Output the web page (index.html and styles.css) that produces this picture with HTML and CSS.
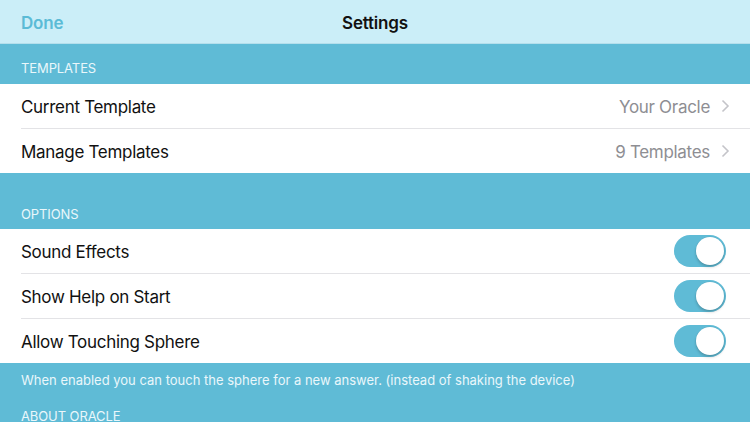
FILE: index.html
```html
<!DOCTYPE html>
<html>
<head>
<meta charset="utf-8">
<link rel="stylesheet" href="styles.css">
</head>
<body>
<div class="nav">
  <span class="done">Done</span>
  <span class="title">Settings</span>
</div>
<div class="section-head">TEMPLATES</div>
<div class="group">
  <div class="row">
    <span class="label">Current Template</span>
    <span class="value">Your Oracle</span>
    <svg class="chev" width="9" height="14" viewBox="0 0 9 14"><path d="M1.5 1.5 L7 7 L1.5 12.5" fill="none" stroke="#c4c4c9" stroke-width="1.6"/></svg>
  </div>
  <div class="row">
    <span class="label">Manage Templates</span>
    <span class="value">9 Templates</span>
    <svg class="chev" width="9" height="14" viewBox="0 0 9 14"><path d="M1.5 1.5 L7 7 L1.5 12.5" fill="none" stroke="#c4c4c9" stroke-width="1.6"/></svg>
  </div>
</div>
<div class="section-head tall">OPTIONS</div>
<div class="group">
  <div class="row">
    <span class="label">Sound Effects</span>
    <span class="toggle"><span class="knob"></span></span>
  </div>
  <div class="row">
    <span class="label">Show Help on Start</span>
    <span class="toggle"><span class="knob"></span></span>
  </div>
  <div class="row">
    <span class="label">Allow Touching Sphere</span>
    <span class="toggle"><span class="knob"></span></span>
  </div>
</div>
<div class="footer">When enabled you can touch the sphere for a new answer. (instead of shaking the device)</div>
<div class="section-head about">ABOUT ORACLE</div>
</body>
</html>
```
FILE: styles.css
```css
* { box-sizing: border-box; }
html, body { margin: 0; padding: 0; }
body {
  width: 750px;
  height: 422px;
  overflow: hidden;
  background: #5fbbd6;
  font-family: Inter, "Noto Sans", sans-serif;
  -webkit-font-smoothing: antialiased;
}
.nav {
  height: 44px;
  background: #cbeef8;
  display: flex;
  align-items: center;
  justify-content: center;
  position: relative;
  padding-top: 2px;
  border-bottom: 1px solid #b4dfec;
}
.done {
  position: absolute;
  left: 21px;
  top: 13px;
  font-size: 17px;
  font-weight: 600;
  color: #5bbbd6;
  letter-spacing: -0.2px;
}
.title {
  font-size: 17px;
  font-weight: 600;
  color: #111;
  letter-spacing: -0.2px;
}
.section-head {
  height: 40px;
  padding: 16px 0 0 21px;
  font-size: 13px;
  color: #eaf7fb;
  letter-spacing: -0.1px;
}
.section-head.tall {
  height: 56px;
  padding-top: 33px;
}
.group {
  background: #fff;
}
.row {
  height: 44px;
  display: flex;
  align-items: center;
  padding: 2px 20px 0 21px;
  position: relative;
}
.row + .row {
  height: 45px;
  padding-top: 3px;
}
.row + .row::before {
  content: "";
  position: absolute;
  top: 0;
  left: 21px;
  right: 0;
  height: 1px;
  background: #e3e3e6;
}
.label {
  flex: 1;
  font-size: 17px;
  color: #111;
  letter-spacing: -0.3px;
}
.value {
  font-size: 17px;
  color: #8e8e93;
  letter-spacing: -0.3px;
  margin-right: 11px;
}
.chev { display: block; margin-top: -2px; }
.toggle {
  width: 52px;
  height: 32px;
  border-radius: 16px;
  background: #5fbbd6;
  position: relative;
  margin-right: 4px;
  margin-top: -2px;
}
.knob {
  position: absolute;
  right: 2px;
  top: 2px;
  width: 28px;
  height: 28px;
  border-radius: 50%;
  background: #fff;
  box-shadow: 0 2px 3px rgba(0,0,0,0.2), 0 0 0 0.5px rgba(0,0,0,0.06);
}
.footer {
  padding: 9px 21px 0 21px;
  height: 41px;
  font-size: 13px;
  color: #eaf7fb;
  letter-spacing: 0;
}
.section-head.about {
  padding-top: 4px;
}
```
